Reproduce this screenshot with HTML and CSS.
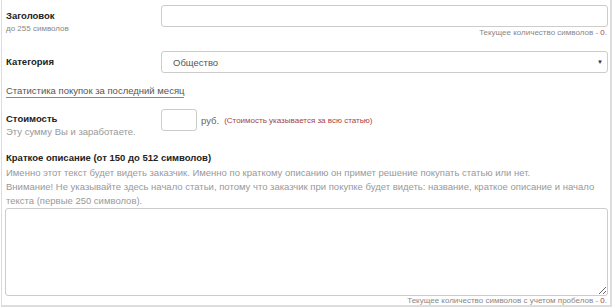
FILE: index.html
```html
<!DOCTYPE html>
<html lang="ru">
<head>
    <meta charset="UTF-8">
    <title>Новая статья</title>
    <link rel="stylesheet" href="styles.css">
</head>
<body>
    <div class="form">
        <!-- заголовок -->
        <div class="row row-title">
            <div class="label">
                <b>Заголовок</b>
                <small>до 255 символов</small>
            </div>
            <div class="field">
                <input type="text" class="input">
                <div class="counter">Текущее количество символов - <span class="num">0</span>.</div>
            </div>
        </div>

        <!-- категория -->
        <div class="row row-cat">
            <div class="label"><b>Категория</b></div>
            <div class="field">
                <div class="select">
                    <span>Общество</span>
                    <i class="arrow">▼</i>
                </div>
            </div>
        </div>

        <a class="stats">Статистика покупок за последний месяц</a>

        <!-- стоимость -->
        <div class="row row-price">
            <div class="label">
                <b>Стоимость</b>
                <span class="hint">Эту сумму Вы и заработаете.</span>
            </div>
            <div class="field price">
                <input type="text" class="input small">
                <span class="rub">руб.</span>
                <span class="note">(Стоимость указывается за всю статью)</span>
            </div>
        </div>

        <!-- краткое описание -->
        <div class="desc">
            <b>Краткое описание (от 150 до 512 символов)</b>
            <p>Именно этот текст будет видеть заказчик. Именно по краткому описанию он примет решение покупать статью или нет.<br>Внимание! Не указывайте здесь начало статьи, потому что заказчик при покупке будет видеть: название, краткое описание и начало текста (первые 250 символов).</p>
            <textarea></textarea>
            <div class="counter last">Текущее количество символов с учетом пробелов - <span class="num">0</span>.</div>
        </div>
    </div>
</body>
</html>
```

FILE: styles.css
```css
* {
    margin: 0;
    padding: 0;
    box-sizing: border-box;
}

body {
    font-family: "Liberation Sans", Arial, sans-serif;
    font-size: 9.5px;
    color: #333;
    background: #fff;
    overflow: hidden;
}

.form {
    width: 611px;
    height: 307px;
    margin-left: 1px;
    border: 1px solid #ddd;
    border-top: none;
    border-right-width: 2px;
    border-bottom-width: 2px;
    padding: 5px 2px 0 3px;
}

.row {
    display: flex;
}

.label {
    width: 156px;
    padding-left: 1px;
    display: flex;
    flex-direction: column;
}

.label b {
    font-size: 9.5px;
    font-weight: bold;
    color: #222;
    line-height: 12px;
}

.label small {
    font-size: 8px;
    color: #888;
    line-height: 14px;
}

.field {
    flex: 1;
}

.input {
    display: block;
    width: 100%;
    height: 22px;
    border: 1px solid #ccc;
    border-radius: 3px;
    background: #fff;
}

.counter {
    text-align: right;
    font-size: 8px;
    color: #888;
    line-height: 12px;
    margin-right: 1px;
}

.counter.last {
    line-height: 10px;
}

.num {
    color: #a94442;
}

.row-title .label {
    padding-top: 5px;
}

.row-cat {
    margin-top: 12px;
}

.row-cat .label {
    justify-content: center;
}

.select {
    height: 22px;
    border: 1px solid #ccc;
    border-radius: 3px;
    display: flex;
    align-items: center;
    justify-content: space-between;
    padding: 0 4px 0 11px;
    color: #555;
}

.arrow {
    font-style: normal;
    font-size: 6px;
    color: #333;
}

.stats {
    display: inline-block;
    margin: 12px 0 0 1px;
    color: #555;
    line-height: 12px;
    border-bottom: 1px solid #888;
}

.row-price {
    margin-top: 11px;
}

.row-price .label {
    padding-top: 4px;
}

.hint {
    color: #999;
    line-height: 14px;
}

.price {
    display: flex;
    align-items: center;
    align-self: flex-start;
}

.input.small {
    width: 36px;
}

.rub {
    margin-left: 4px;
    color: #666;
}

.note {
    margin-left: 5px;
    font-size: 8px;
    color: #a94442;
}

.desc {
    margin-top: 13px;
}

.desc b {
    display: block;
    font-size: 9.5px;
    color: #222;
    padding-left: 1px;
    line-height: 12px;
}

.desc p {
    margin-top: 2px;
    padding-left: 1px;
    color: #999;
    line-height: 14px;
}

textarea {
    display: block;
    width: 603px;
    height: 88px;
    border: 1px solid #ccc;
    border-radius: 3px;
    resize: vertical;
}
```
